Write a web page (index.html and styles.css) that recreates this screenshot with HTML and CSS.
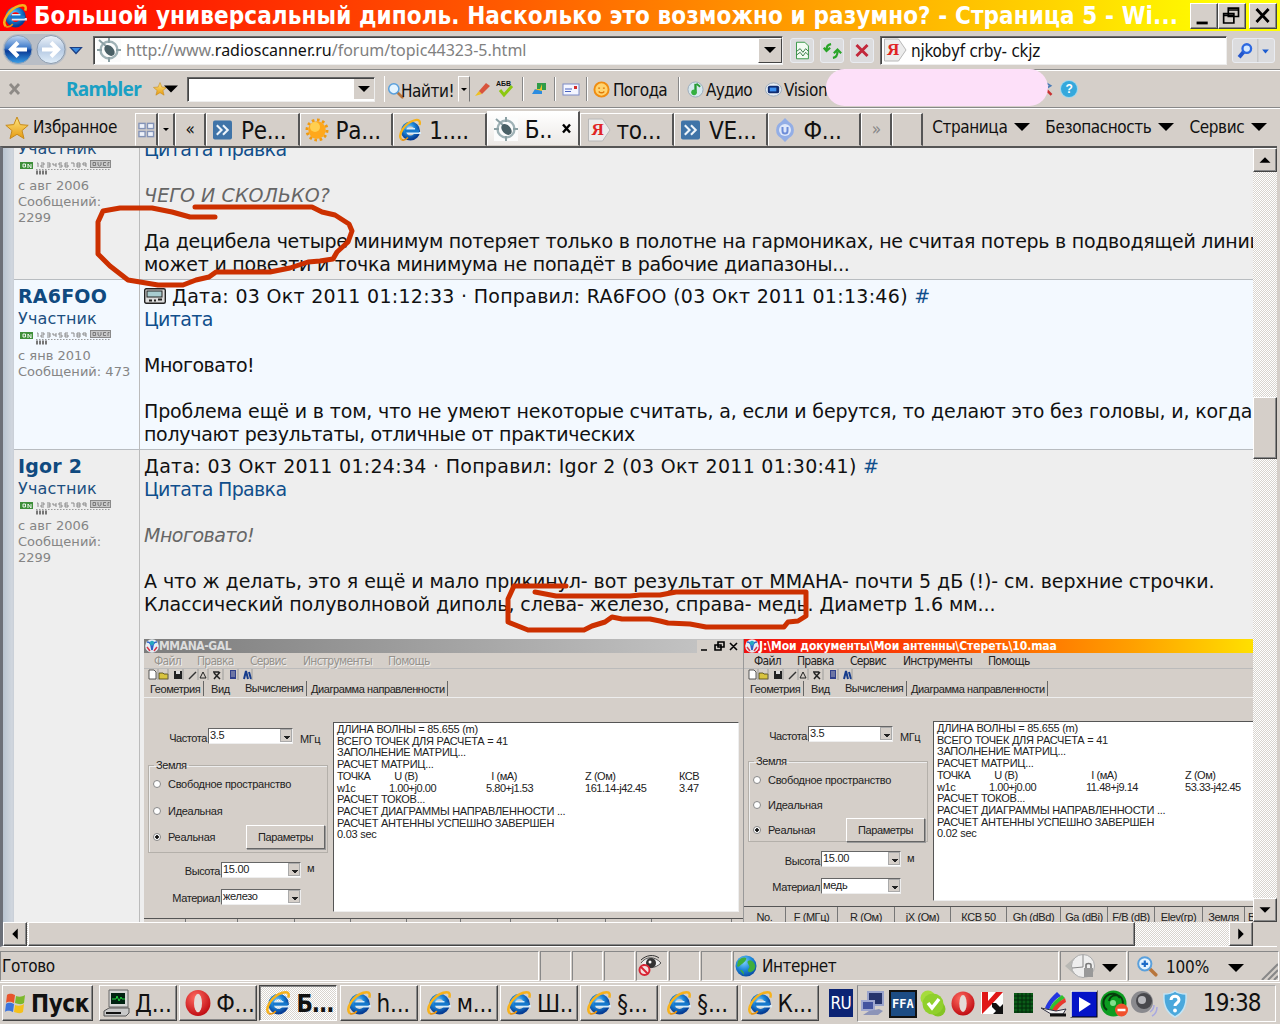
FILE: index.html
```
<!DOCTYPE html>
<html lang="ru">
<head>
<meta charset="utf-8">
<title>Большой универсальный диполь</title>
<link rel="stylesheet" href="styles.css">
</head>
<body>
<svg class="defs" width="0" height="0">
  <defs>
    <radialGradient id="gBlue" cx=".4" cy=".3" r=".8"><stop offset="0" stop-color="#7fd0ff"/><stop offset=".5" stop-color="#1c86d8"/><stop offset="1" stop-color="#063d94"/></radialGradient>
    <linearGradient id="gNav" x1="0" y1="0" x2="0" y2="1"><stop offset="0" stop-color="#c3d9f3"/><stop offset=".45" stop-color="#3c78c8"/><stop offset=".55" stop-color="#0a3a96"/><stop offset="1" stop-color="#3aa0e8"/></linearGradient>
    <linearGradient id="gNav2" x1="0" y1="0" x2="0" y2="1"><stop offset="0" stop-color="#eef4fa"/><stop offset=".5" stop-color="#b4c8e2"/><stop offset="1" stop-color="#e2effa"/></linearGradient>
    <linearGradient id="gStar" x1="0" y1="0" x2="0" y2="1"><stop offset="0" stop-color="#ffe680"/><stop offset="1" stop-color="#e59a10"/></linearGradient>
    <radialGradient id="gRed" cx=".4" cy=".3" r=".8"><stop offset="0" stop-color="#ff6a60"/><stop offset="1" stop-color="#b80008"/></radialGradient>
  </defs>
  <symbol id="ie" viewBox="0 0 24 24">
    <circle cx="12.500" cy="13" r="7" fill="none" stroke="url(#gBlue)" stroke-width="5"/>
    <path d="M9 11.200h8M9 15h14" stroke="#d8ecf8" stroke-width="2.200"/>
    <path d="M7 13h14" stroke="#1678cc" stroke-width="3"/>
    <path d="M3.500 21.500C-1 17 7 5 16 2.500c4-1.200 7-.5 5.500 4.500" fill="none" stroke="#f6b21c" stroke-width="2.300"/>
    <path d="M3.500 21.500c2 1.500 5-.5 6.500-2" fill="none" stroke="#e59210" stroke-width="1.600"/>
  </symbol>
  <symbol id="star" viewBox="0 0 24 24"><path d="M12 1l3.200 7.600 8 .7-6.200 5.300 2 8-7-4.300-7 4.300 2-8L.8 9.300l8-.7z" fill="url(#gStar)" stroke="#c68a1c" stroke-width="1"/></symbol>
  <symbol id="opera" viewBox="0 0 24 24"><ellipse cx="12" cy="12" rx="11.500" ry="12" fill="url(#gRed)"/><ellipse cx="12" cy="12" rx="3.700" ry="8.500" fill="#e4dcd8"/></symbol>
  <symbol id="scan" viewBox="0 0 24 24"><rect width="24" height="24" fill="#fbfcfc"/><circle cx="12" cy="12" r="8.500" fill="none" stroke="#9fb2b6" stroke-width="2.400"/><path d="M12 0v5M12 19v5M0 12h5M19 12h5M2 2l8 7" stroke="#8ba0a4" stroke-width="2"/><ellipse cx="12.500" cy="12.500" rx="4.200" ry="6.200" transform="rotate(-42 12.500 12.500)" fill="#4a6066"/></symbol>
  <symbol id="dbl" viewBox="0 0 20 20"><rect width="20" height="20" rx="2" fill="#3f74a8"/><path d="M4 5l5 5-5 5M10.500 5l5 5-5 5" fill="none" stroke="#eef5fb" stroke-width="2.200"/></symbol>
  <symbol id="sun" viewBox="0 0 24 24"><circle cx="12" cy="12" r="10" fill="none" stroke="#f09a10" stroke-width="3" stroke-dasharray="2.600 2.600"/><circle cx="12" cy="12" r="8.700" fill="#ffa81c"/><circle cx="10" cy="9" r="5" fill="#ffcf50"/></symbol>
  <symbol id="ya" viewBox="0 0 24 24"><path d="M1.500 1h14L23 12l-7.500 11h-14z" fill="#ececec" stroke="#b8b8b8"/></symbol>
  <symbol id="mag" viewBox="0 0 20 20"><path d="M12 12l6 6" stroke="#b8763c" stroke-width="3.200" stroke-linecap="round"/><circle cx="8" cy="8" r="6" fill="#e4f4ff" stroke="#5aa0dc" stroke-width="1.800"/></symbol>
  <symbol id="globe" viewBox="0 0 22 22"><circle cx="11" cy="11" r="10.500" fill="url(#gBlue)"/><path d="M3 6c3-4 7-4 8-3s-1 4-4 6-3 4-5 2zM13 6c3-2 6 1 7 4s-1 6-4 7-4-2-2-4-3-5-1-7zM5 15c3 0 4 2 4 5" fill="#3fae3c"/></symbol>
  <symbol id="down" viewBox="0 0 16 8"><path d="M0 0h16L8 8z"/></symbol>
  <symbol id="mm" viewBox="0 0 14 14"><circle cx="7" cy="7" r="6.800" fill="#e6eef4"/><path d="M2 3c4 0 4 3 5 8M12 3c-4 0-4 3-5 8" stroke="#2c62c8" stroke-width="1.600" fill="none"/><circle cx="7" cy="4" r="2.200" fill="#28a8c0"/><path d="M2 8l3 4M12 8l-3 4" stroke="#d83848" stroke-width="1.500"/></symbol>
  <symbol id="smeter" viewBox="0 0 92 15">
    <rect y="2" width="13" height="7" fill="#3f8f3a"/><path d="M3 4h2.500v3H3zM8 8V4l3 4V4" fill="none" stroke="#fff" stroke-width=".9"/>
    <path d="M17 3h1v4M21 3h3v2h-3v2h3M27 3h3v4h-3m0-2h3M33 3v2h3m0-2v4M42 3h-3v2h3v2h-3M48 3h-3v4h3v-2h-3M51 3h3v4M57 3h3v4h-3zm0 2h3M66 7V3h-3v2h3" fill="none" stroke="#8a8a8a" stroke-width="1"/>
    <path d="M16 9.500h75" stroke="#999" stroke-dasharray="1.500 1.500"/>
    <rect x="70.500" y=".5" width="20" height="7" fill="#c8c8c8" stroke="#8a8a8a"/><path d="M73 2.500h2.500v3H73zM78 2v3l1.500 1L81 5V2M86 2.500h-2.500v3H86M88 6V2.500h1.500" stroke="#666" fill="none" stroke-width=".8"/>
    <path d="M16 12.500h12" stroke="#777" stroke-width="4" stroke-dasharray="2 1"/>
  </symbol>
  <symbol id="tools" viewBox="0 0 110 12">
    <path d="M1 1h5l2 2v7H1z" fill="#fff" stroke="#333" stroke-width=".8"/><path d="M11 4h4l1 1h4v5h-9z" fill="#d8c440" stroke="#4a4210" stroke-width=".8"/>
    <path d="M26 2h8v8h-8z" fill="#222"/><path d="M28 2h4v3h-4z" fill="#ddd"/><path d="M41 10l7-7" stroke="#333" stroke-width="1.500"/><path d="M52 9l3-6 3 6z" fill="none" stroke="#222"/>
    <path d="M66 4l6 6M72 3l-6 7M65 3h6" stroke="#222" stroke-width="1.500"/><path d="M82 1h6v9h-6z" fill="#30408c"/><path d="M83 3h4M83 5h4M83 7h4" stroke="#aab"/><path d="M96 10l2-8 2 8M101 3l2 7" stroke="#163c8c" stroke-width="2" fill="none"/>
    <path d="M10 0v11M20 0v11M35 0v11M50 0v11M60 0v11M75 0v11M90 0v11M104 0v11" stroke="#888" stroke-width=".7"/>
  </symbol>
</svg>

<header class="title">
  <svg class="i26"><use href="#ie"/></svg>
  <h1>Большой универсальный диполь. Насколько это возможно и разумно? - Страница 5 - Wi...</h1>
  <div class="winbtns">
    <span><svg viewBox="0 0 28 25"><path d="M6 20h12" stroke="#000" stroke-width="3"/></svg></span>
    <span><svg viewBox="0 0 28 25"><path d="M10 4h11v9h-11zM10 6h11M5 10h11v10H5zM5 12h11" fill="none" stroke="#000" stroke-width="1.800"/></svg></span>
    <span><svg viewBox="0 0 28 25"><path d="M7 5l13 14M20 5L7 19" stroke="#000" stroke-width="3"/></svg></span>
  </div>
</header>

<nav class="nav">
  <svg class="arrows" viewBox="0 0 84 36">
    <path d="M18 2h33a15 15 0 010 31H18A15 15 0 0118 2z" fill="#b9bec6"/>
    <circle cx="18" cy="17.500" r="14" fill="url(#gNav)" stroke="#8fa2b8"/><circle cx="51" cy="17.500" r="14" fill="url(#gNav2)" stroke="#8d9cae"/>
    <path d="M27 17.500H12M18 10.500l-7 7 7 7" fill="none" stroke="#fff" stroke-width="4"/>
    <path d="M42 17.500h15M51 10.500l7 7-7 7" fill="none" stroke="#fff" stroke-width="4"/>
    <path d="M70.500 15.500h11l-5.500 6z" fill="#3a8be0" stroke="#1c3f84" stroke-width="1.200"/>
  </svg>
  <div class="field addr"><svg class="i24"><use href="#scan"/></svg><span class="url">http://www.<b>radioscanner.ru</b>/forum/topic44323-5.html</span><span class="combo"><svg><use href="#down"/></svg></span></div>
  <span class="soft"><svg viewBox="0 0 24 24"><path d="M6 3h9l4 4v14H6z" fill="#f2fbf2" stroke="#2f9440"/><path d="M6 13l4-3 3 4 3-4 3 3M6 17l4-3 3 4 3-4 3 3" fill="none" stroke="#2f7440"/></svg></span>
  <span class="soft"><svg viewBox="0 0 24 24"><path d="M11 5c-3.500.5-5 3-5 6M3 9l3 3.500 4-3.500M13 20c3.500-.5 5-3 5-7M14 15l4-4 4 4" fill="none" stroke="#28a428" stroke-width="2.400"/></svg></span>
  <span class="soft"><svg viewBox="0 0 24 24"><path d="M6 6l12 12M18 6L6 18" stroke="#c2283c" stroke-width="3.200"/></svg></span>
  <div class="field search"><span class="yandex"><svg class="i24"><use href="#ya"/></svg><b>Я</b></span><span>njkobyf crby- ckjz</span></div>
  <span class="soft wide"><svg viewBox="0 0 42 24"><path d="M6 19l5-6" stroke="#2456cc" stroke-width="4"/><circle cx="14" cy="10" r="4.500" fill="#d4e8ff" stroke="#2c68e0" stroke-width="2.400"/><path d="M25.500 0v24" stroke="#bbb"/><path d="M30 11h7l-3.500 4z" fill="#1c5cd0"/></svg></span>
</nav>

<div class="rambler">
  <svg class="i14" viewBox="0 0 14 14"><path d="M2 2l9 10M11 2L2 12" stroke="#8e8a86" stroke-width="2.800"/></svg>
  <strong class="logo">Rambler</strong>
  <span class="duo"><svg class="i14"><use href="#star"/></svg><svg class="tri"><use href="#down"/></svg></span>
  <div class="field rin"><span class="combo flat"><svg><use href="#down"/></svg></span></div>
  <span class="find"><svg class="i17"><use href="#mag"/></svg><span>Найти!</span></span>
  <span class="minid"><svg><use href="#down"/></svg></span>
  <svg class="i18" viewBox="0 0 18 18"><path d="M2 16l4-5 3 3z" fill="#f0c020"/><path d="M6 11l7-8 4 3-8 8z" fill="#d8543c"/></svg>
  <span class="abv"><em>АБВ</em><svg viewBox="0 0 18 18"><path d="M4 10l4 5 8-9" fill="none" stroke="#8cc810" stroke-width="3"/></svg></span>
  <i class="sep"></i>
  <svg class="i18" viewBox="0 0 18 18"><path d="M1 14l3-5h7v5z" fill="#2c8ce0"/><path d="M6 3h9v7H6z" fill="#2f9c48"/><path d="M3 9h6l2-5v7z" fill="#f0c428"/></svg>
  <i class="sep"></i>
  <svg class="i18" viewBox="0 0 18 18"><rect x="1" y="4" width="16" height="11" fill="#f4f6ff" stroke="#7c8cc8"/><path d="M3 9h7M3 11.500h6" stroke="#4a64c0"/><rect x="12" y="6" width="3" height="3" fill="#d42c2c"/></svg>
  <i class="sep"></i>
  <svg class="i16" viewBox="0 0 18 18"><circle cx="9" cy="9" r="7.500" fill="#ffd470" stroke="#f08c10" stroke-width="2"/><path d="M5.500 7.500h2M10.500 7.500h2M6 11c2 2 4 2 6 0" stroke="#e07808" fill="none" stroke-width="1.500"/></svg>
  <span class="pog">Погода</span>
  <i class="sep"></i>
  <svg class="i16" viewBox="0 0 18 18"><circle cx="9" cy="9" r="8" fill="#d6e8ee" stroke="#9ab"/><path d="M9 3v8" stroke="#259a34" stroke-width="2.500"/><circle cx="7.500" cy="12" r="3" fill="#33b040"/><path d="M10 3l4 3" stroke="#259a34" stroke-width="2"/></svg>
  <span class="aud">Аудио</span>
  <svg class="i16" viewBox="0 0 18 18"><ellipse cx="9" cy="9" rx="8.500" ry="7" fill="#e8eef4" stroke="#9ab"/><rect x="3" y="5" width="12" height="8" rx="2" fill="#102c70"/><rect x="5" y="7" width="7" height="4" fill="#3c90f0"/></svg>
  <span class="vis">Vision</span>
  <svg class="i12" viewBox="0 0 12 18"><path d="M3 2l5 3-5 3" stroke="#4c7cb8" stroke-width="2" fill="none"/><path d="M3 10l6 6" stroke="#c83030" stroke-width="3"/></svg>
  <span class="help">?</span>
</div>

<div class="tabs">
  <svg class="i24"><use href="#star"/></svg><span class="fav">Избранное</span>
  <span class="tab qt"><svg viewBox="0 0 18 18"><g fill="#eef2fa" stroke="#8494b8" stroke-width="1.500"><rect x="1" y="2" width="6.500" height="5.500"/><rect x="10" y="2" width="6.500" height="5.500"/><rect x="1" y="10.500" width="6.500" height="5.500"/><rect x="10" y="10.500" width="6.500" height="5.500"/></g></svg></span>
  <span class="tab md"><svg><use href="#down"/></svg></span>
  <span class="tab sm">«</span>
  <span class="tab"><svg class="i20"><use href="#dbl"/></svg><span>Ре...</span></span>
  <span class="tab sunny"><svg class="i24"><use href="#sun"/></svg><span>Ра...</span></span>
  <span class="tab sunny"><svg class="i24"><use href="#ie"/></svg><span>1....</span></span>
  <span class="tab on"><svg class="i24"><use href="#scan"/></svg><span>Б..</span><svg class="x" viewBox="0 0 10 10"><path d="M1 1l7 8M8 1L1 9" stroke="#000" stroke-width="2.400"/></svg></span>
  <span class="tab"><span class="yandex"><svg class="i24"><use href="#ya"/></svg><b>Я</b></span><span>то...</span></span>
  <span class="tab"><svg class="i20"><use href="#dbl"/></svg><span>VE...</span></span>
  <span class="tab sunny"><svg class="i24" viewBox="0 0 24 24"><path d="M12 0l4 4a9 9 0 010 16l-4 4-4-4a9 9 0 010-16z" fill="#93aee6"/><circle cx="12" cy="12" r="6" fill="#dfe8fa"/><path d="M9.500 9v4a2.500 2.500 0 005 0V9" fill="none" stroke="#6c8cd8" stroke-width="2"/></svg><span>Ф...</span></span>
  <span class="tab sm dim">»</span>
  <span class="tab sm"></span>
  <span class="menu m1">Страница<svg><use href="#down"/></svg></span>
  <span class="menu m2">Безопасность<svg><use href="#down"/></svg></span>
  <span class="menu m3">Сервис<svg><use href="#down"/></svg></span>
</div>

<main class="view">
  <div class="page">
    <article class="post first">
      <aside><span class="role">Участник</span><svg class="sm-meter"><use href="#smeter"/></svg><p>с авг 2006</p><p>Сообщений:</p><p>2299</p></aside>
      <section>
        <p class="l-cit"><a>Цитата</a> <a>Правка</a></p><br>
        <p class="q">ЧЕГО И СКОЛЬКО?</p><br>
        <p class="l-one">Да децибела четыре минимум потеряет только в полотне на гармониках, не считая потерь в подводящей линии</p>
        <p class="l-mid">может и повезти и точка минимума не попадёт в рабочие диапазоны...</p>
      </section>
    </article>
    <article class="post alt">
      <aside><b class="nick">RA6FOO</b><span class="role">Участник</span><svg class="sm-meter"><use href="#smeter"/></svg><p>с янв 2010</p><p>Сообщений: 473</p></aside>
      <section>
        <p class="l-date"><svg class="pager" viewBox="0 0 22 16"><rect x=".7" y=".7" width="20.600" height="14.600" rx="1.500" fill="#ddd" stroke="#222" stroke-width="1.400"/><rect x="3" y="3" width="15" height="6" fill="#a8ccd0" stroke="#222"/><path d="M5 12.500h3M10 12.500h2M14 11.500h4" stroke="#222" stroke-width="2"/></svg>Дата: 03 Окт 2011 01:12:33 · Поправил: RA6FOO (03 Окт 2011 01:13:46) <a>#</a></p>
        <p class="l-cit"><a>Цитата</a></p><br>
        <p class="l-mn">Многовато!</p><br>
        <p class="l-prob">Проблема ещё и в том, что не умеют некоторые считать, а, если и берутся, то делают это без головы, и, когда</p>
        <p class="l-res">получают результаты, отличные от практических</p>
      </section>
    </article>
    <article class="post last">
      <aside><b class="nick">Igor 2</b><span class="role">Участник</span><svg class="sm-meter"><use href="#smeter"/></svg><p>с авг 2006</p><p>Сообщений:</p><p>2299</p></aside>
      <section>
        <p class="l-date">Дата: 03 Окт 2011 01:24:34 · Поправил: Igor 2 (03 Окт 2011 01:30:41) <a>#</a></p>
        <p class="l-cit"><a>Цитата</a> <a>Правка</a></p><br>
        <p class="q l-mn">Многовато!</p><br>
        <p class="l-a">А что ж делать, это я ещё и мало прикинул- вот результат от ММАНА- почти 5 дБ (!)- см. верхние строчки.</p>
        <p class="l-a">Классический полуволновой диполь, слева- железо, справа- медь. Диаметр 1.6 мм...</p>
        <figure class="shots">
          <div class="mm gray">
            <div class="mt"><svg class="i14"><use href="#mm"/></svg><span class="mname">MMANA-GAL</span><span class="mbtn"><svg viewBox="0 0 46 13"><path d="M4 10h6M21 2h6v5h-6zM18 5h6v5h-6zM33 3l7 7M40 3l-7 7" fill="none" stroke="#000" stroke-width="1.600"/></svg></span></div>
            <div class="mmenu"><span>Файл</span><span>Правка</span><span>Сервис</span><span>Инструменты</span><span>Помощь</span></div>
            <svg class="mtools"><use href="#tools"/></svg>
            <div class="mtabs"><span>Геометрия</span><span>Вид</span><span>Вычисления</span><span>Диаграмма направленности</span></div>
            <div class="mbody">
              <div class="left">
                <div class="row freq"><span>Частота</span><span class="cb">3.5<i></i></span><span class="unit">МГц</span></div>
                <fieldset><legend>Земля</legend>
                  <div class="rad"><i></i>Свободное пространство</div><div class="rad"><i></i>Идеальная</div><div class="rad sel"><i></i>Реальная<span class="pb">Параметры</span></div>
                </fieldset>
                <div class="row"><span>Высота</span><span class="cb">15.00<i></i></span><span class="unit up">м</span></div>
                <div class="row"><span>Материал</span><span class="cb">железо<i></i></span></div>
              </div>
              <div class="out">
                <p>ДЛИНА ВОЛНЫ = 85.655 (m)</p><p>ВСЕГО ТОЧЕК ДЛЯ РАСЧЕТА = 41</p><p>ЗАПОЛНЕНИЕ МАТРИЦ...</p><p>РАСЧЕТ МАТРИЦ...</p>
                <p class="cols"><span>ТОЧКА</span><span>&nbsp; U (В)</span><span>&nbsp; I (мА)</span><span>Z (Ом)</span><span>КСВ</span></p>
                <p class="cols"><span>w1c</span><span>1.00+j0.00</span><span>5.80+j1.53</span><span>161.14-j42.45</span><span>3.47</span></p>
                <p>РАСЧЕТ ТОКОВ...</p><p>РАСЧЕТ ДИАГРАММЫ НАПРАВЛЕННОСТИ ...</p><p>РАСЧЕТ АНТЕННЫ УСПЕШНО ЗАВЕРШЕН</p><p>0.03 sec</p>
              </div>
            </div>
            <div class="mtable"><span></span><span></span><span></span><span></span><span></span><span></span><span></span><span></span><span></span><span></span><span></span></div>
          </div>
          <div class="mm color">
            <div class="mt"><svg class="i14"><use href="#mm"/></svg><span class="mname">J:\Мои документы\Мои антенны\Стереть\10.maa</span></div>
            <div class="mmenu"><span>Файл</span><span>Правка</span><span>Сервис</span><span>Инструменты</span><span>Помощь</span></div>
            <svg class="mtools"><use href="#tools"/></svg>
            <div class="mtabs"><span>Геометрия</span><span>Вид</span><span>Вычисления</span><span>Диаграмма направленности</span></div>
            <div class="mbody">
              <div class="left">
                <div class="row freq"><span>Частота</span><span class="cb">3.5<i></i></span><span class="unit">МГц</span></div>
                <fieldset><legend>Земля</legend>
                  <div class="rad"><i></i>Свободное пространство</div><div class="rad"><i></i>Идеальная</div><div class="rad sel"><i></i>Реальная<span class="pb">Параметры</span></div>
                </fieldset>
                <div class="row"><span>Высота</span><span class="cb">15.00<i></i></span><span class="unit up">м</span></div>
                <div class="row"><span>Материал</span><span class="cb">медь<i></i></span></div>
              </div>
              <div class="out">
                <p>ДЛИНА ВОЛНЫ = 85.655 (m)</p><p>ВСЕГО ТОЧЕК ДЛЯ РАСЧЕТА = 41</p><p>ЗАПОЛНЕНИЕ МАТРИЦ...</p><p>РАСЧЕТ МАТРИЦ...</p>
                <p class="cols"><span>ТОЧКА</span><span>&nbsp; U (В)</span><span>&nbsp; I (мА)</span><span>Z (Ом)</span></p>
                <p class="cols"><span>w1c</span><span>1.00+j0.00</span><span>11.48+j9.14</span><span>53.33-j42.45</span></p>
                <p>РАСЧЕТ ТОКОВ...</p><p>РАСЧЕТ ДИАГРАММЫ НАПРАВЛЕННОСТИ ...</p><p>РАСЧЕТ АНТЕННЫ УСПЕШНО ЗАВЕРШЕН</p><p>0.02 sec</p>
              </div>
            </div>
            <div class="mtable"><span>No.</span><span>F (МГц)</span><span>R (Ом)</span><span>jX (Ом)</span><span>КСВ 50</span><span>Gh (dBd)</span><span>Ga (dBi)</span><span>F/B (dB)</span><span>Elev(гр)</span><span>Земля</span><span>В</span></div>
          </div>
        </figure>
      </section>
    </article>
  </div>
  <div class="vbar"><span class="sb"><svg viewBox="0 0 24 22"><path d="M6 14h12l-6-6z"/></svg></span><span class="gap1"></span><span class="thumb"></span><span class="gap2"></span><span class="sb"><svg viewBox="0 0 24 22"><path d="M6 8h12l-6 6z"/></svg></span></div>
  <div class="hbar"><span class="sb"><svg viewBox="0 0 24 24"><path d="M15 6v12l-6-6z"/></svg></span><span class="thumb"></span><span class="fill"></span><span class="sb"><svg viewBox="0 0 24 24"><path d="M9 6v12l6-6z"/></svg></span><span class="corner"></span></div>
</main>

<footer class="status">
  <span>Готово</span><span></span><span></span><span></span>
  <span><svg class="i24" viewBox="0 0 24 24"><path d="M3 9c5-7 14-7 20 0-6 6-14 6-18 1" fill="#eee" stroke="#555"/><path d="M3 6c5-5 13-6 18-2" stroke="#333" fill="none"/><circle cx="13" cy="9" r="5" fill="#333"/><circle cx="12" cy="8" r="1.500" fill="#fff"/><circle cx="6.500" cy="16" r="5" fill="#f4dede" stroke="#d82434" stroke-width="2"/><path d="M3 13l7 7" stroke="#d82434" stroke-width="2"/></svg></span>
  <span></span><span></span>
  <span><svg class="i22"><use href="#globe"/></svg>Интернет</span>
  <span><svg class="prot" viewBox="0 0 32 26"><path d="M1 13l9-8v16z" fill="#b8b8b4"/><circle cx="19" cy="13" r="11.500" fill="#eee" stroke="#aaa"/><path d="M19 2v12M8 15l11-1" stroke="#888"/><rect x="20" y="15" width="9" height="9" fill="#999"/><path d="M22 15v-3c0-2 5-2 5 0v3" stroke="#777" fill="none" stroke-width="1.600"/></svg><svg class="tri"><use href="#down"/></svg></span>
  <span><svg class="i22" viewBox="0 0 20 20"><use href="#mag" width="20" height="20"/><path d="M5 8h6M8 5v6" stroke="#1c6cc8" stroke-width="2"/></svg><em>100%</em><svg class="tri"><use href="#down"/></svg><svg class="grip" viewBox="0 0 18 24"><path d="M2 23L18 7M8 23l10-10M14 23l4-4" stroke="#888" stroke-width="2"/></svg></span>
</footer>

<div class="task">
  <span class="tb start"><svg class="i24" viewBox="0 0 24 24"><path d="M3 4c3-2 5-1 8 0l-1 8c-3-1-5-2-8 0z" fill="#e8542c"/><path d="M12 5c3 1 6 1 9-1l-1 8c-3 2-6 1-9 0z" fill="#7cb82c"/><path d="M2 13c3-2 5-1 8 0l-1 8c-3-1-5-2-8 0z" fill="#3c74dc"/><path d="M11 14c3 1 6 1 9-1l-1 8c-3 2-6 1-9 0z" fill="#f4c01c"/></svg><b>Пуск</b></span>
  <span class="tb"><svg class="i28" viewBox="0 0 28 28"><path d="M6 1h19v17H6z" fill="#d8d8d8" stroke="#666"/><rect x="8" y="4" width="14" height="11" fill="#021"/><path d="M9 10h4l1-3 2 5 2-4 1 2h3" stroke="#20d040" fill="none"/><path d="M1 22l5-3h20v5l-3 3H1z" fill="#c8c8c8" stroke="#555"/><path d="M3 24h15" stroke="#111" stroke-width="2"/></svg><span>Д...</span></span>
  <span class="tb"><svg class="i26"><use href="#opera"/></svg><span>Ф...</span></span>
  <span class="tb on"><svg class="i26"><use href="#ie"/></svg><b>Б...</b></span>
  <span class="tb"><svg class="i26"><use href="#ie"/></svg><span>h...</span></span>
  <span class="tb"><svg class="i26"><use href="#ie"/></svg><span>м...</span></span>
  <span class="tb"><svg class="i26"><use href="#ie"/></svg><span>Ш..</span></span>
  <span class="tb"><svg class="i26"><use href="#ie"/></svg><span>§...</span></span>
  <span class="tb"><svg class="i26"><use href="#ie"/></svg><span>§...</span></span>
  <span class="tb"><svg class="i26"><use href="#ie"/></svg><span>К...</span></span>
  <span class="lang">RU</span>
  <div class="tray">
    <svg viewBox="0 0 28 28"><path d="M9 2h15v13H9z" fill="#26346c" stroke="#9aa4cc" stroke-width="2"/><path d="M3 11h12v9H3z" fill="#4454a0" stroke="#a0a8d0" stroke-width="2"/><path d="M4 25l6-4 10-2 4 2-5 4z" fill="#8c94b8"/></svg>
    <span class="ffa">FFA</span>
    <svg viewBox="0 0 28 28"><circle cx="9" cy="8" r="7.500" fill="#a6dc3c"/><circle cx="19" cy="19" r="7.500" fill="#84c424"/><circle cx="14" cy="14" r="10.500" fill="#90d02c"/><path d="M9 13l4 5 7-9" fill="none" stroke="#fff" stroke-width="3.500"/></svg>
    <svg viewBox="0 0 28 28"><use href="#opera" x="2" y="1" width="24" height="25"/></svg>
    <svg viewBox="0 0 28 28"><rect x="2" y="2" width="22" height="22" fill="#fff"/><path d="M3 2h6v9l8-9h7L13 14l-4 4-6 6z" fill="#e01818"/><path d="M13 13l4 0 4 4 3-3v10H14l3-3-4-4z" fill="#111"/></svg>
    <svg viewBox="0 0 28 28"><rect x="4" y="3" width="19" height="20" fill="#0b5c18"/><path d="M4 6h19M4 10h19M4 14h19M4 18h19M4 22h19M8 3v20M12 3v20M16 3v20M20 3v20" stroke="#02280a"/></svg>
    <svg viewBox="0 0 28 28"><path d="M5 18C8 10 13 6 17 2l4 4C15 9 12 13 9 20z" fill="#2436e0"/><path d="M9 20c3-8 8-11 13-15l3 3c-5 3-9 7-12 13z" fill="#30c030"/><path d="M12 21c2-6 8-10 13-13l1 4c-5 3-8 6-10 10z" fill="#e8382c"/><path d="M1 18l10 6h12l3-5-10 2z" fill="#f0f0f0" stroke="#334"/><path d="M10 25h16" stroke="#111" stroke-width="3"/></svg>
    <svg viewBox="0 0 28 28"><rect x="1" y="1" width="26" height="26" fill="#0414c8" stroke="#000"/><path d="M1 27V1h26" stroke="#fff" stroke-width="1.500" fill="none"/><path d="M9 7l12 7-12 8z" fill="#fff"/></svg>
    <svg viewBox="0 0 28 28"><circle cx="13.500" cy="13.500" r="13" fill="#0c9c20"/><path d="M7 20a9 9 0 1113-12M18 19a7 7 0 10-9-8" fill="none" stroke="#063c0c" stroke-width="2"/><circle cx="13" cy="13" r="3" fill="#7fe08c"/><circle cx="21.500" cy="20" r="6.500" fill="#f0502c"/><path d="M17.500 20h8" stroke="#fff" stroke-width="2.500"/></svg>
    <svg viewBox="0 0 28 28"><circle cx="12" cy="12" r="11" fill="#8a8a8e"/><circle cx="14" cy="11" r="8" fill="#48484c"/><circle cx="12" cy="10" r="4" fill="#b8b8bc"/><path d="M20 22c3-2 4-4 4-7M22 26c4-2 5-6 5-9" stroke="#a8a8e0" fill="none" stroke-width="1.500"/></svg>
    <svg viewBox="0 0 28 28"><path d="M14 1c4 3 8 3 11 3 1 12-3 19-11 23C6 23 2 16 3 4c3 0 7 0 11-3z" fill="#4aa8dc" stroke="#c4e4f4" stroke-width="1.500"/><path d="M10 10c0-5 8-5 8 0 0 3-4 3-4 6" fill="none" stroke="#fff" stroke-width="3"/><circle cx="14" cy="20.500" r="1.900" fill="#fff"/></svg>
    <time>19:38</time>
  </div>
</div>

<svg class="ink" viewBox="0 0 1280 1024">
  <path d="M195 207H312L322 212L335 215L349 224L352 231L348 242L337 252L333 259L320 261L308 262L290 268L270 272H216L209 277L196 280L183 285H158L128 280L110 266L98 254V222L103 211L120 208H152L172 212L190 217H215"/>
  <path d="M566 586H514L508 599V622L528 630H584L592 626L605 622L612 617L622 619H650L660 621L668 623L690 624L706 627H784L788 622L798 621L806 616V592H676L660 595H640L630 596H556L535 592"/>
</svg>
</body>
</html>
```
FILE: styles.css
```
*{box-sizing:border-box}
body{margin:0;width:1280px;height:1024px;overflow:hidden;background:#d5cfc9;font:17px/1.2 "DejaVu Sans Condensed","DejaVu Sans",sans-serif;letter-spacing:-.4px;color:#111;display:flex;flex-direction:column;white-space:nowrap;position:relative}
p,h1,figure,fieldset{margin:0;padding:0;border:0}
svg{display:block;flex:none}
span,strong,time{flex:none}
.defs{position:absolute}
.i12{width:10px;height:18px}.i14{width:14px;height:14px}.i16{width:17px;height:17px}.i17{width:17px;height:17px}.i18{width:18px;height:18px}
.i20{width:19px;height:20px}.i22{width:22px;height:22px}.i24{width:24px;height:24px}.i26{width:26px;height:26px}.i28{width:28px;height:28px}
.tri{width:16px;height:8px}

.title{height:31px;flex:none;display:flex;align-items:center;padding:0 3px 0 2px;background:linear-gradient(90deg,#f00 0,#ff1a00 12%,#ff5c00 40%,#ff9c00 62%,#ffd400 82%,#ff0 96%)}
.title h1{font-size:24px;line-height:31px;letter-spacing:.09px;color:#fff;margin-left:6px;padding-top:2px;width:1156px}
.winbtns{display:flex}
.winbtns span{width:28px;height:26px;background:#d5cfc9;border:1px solid;border-color:#fff #444 #444 #fff;box-shadow:inset -1px -1px #888}
.winbtns span:last-child{margin-left:3px}
.winbtns svg{width:26px;height:24px}

.nav{height:39px;flex:none;display:flex;align-items:center;border-bottom:1px solid #888}
.arrows{width:84px;height:36px}
.field{height:29px;background:#fff;border:1px solid;border-color:#666 #eee #eee #666;box-shadow:inset 1px 1px #444;display:flex;align-items:center}
.addr{width:690px;margin-left:9px;padding-left:3px}
.url{font-family:"Noto Sans",sans-serif;font-size:16px;letter-spacing:0;color:#808080;margin-left:5px;padding-top:2px}
.url b{font-weight:400;color:#111}
.combo{width:24px;height:25px;margin-left:auto;background:#d5cfc9;border:1px solid;border-color:#fff #444 #444 #fff;display:grid;place-items:center}
.combo svg{width:12px;height:6px}
.combo.flat{width:20px;height:20px;border-color:#d5cfc9}
.soft{width:24px;height:25px;margin-left:7px;border:1px solid #e9ecf2;border-radius:3px;background:#dcdcde}
.soft svg{width:22px;height:23px}
.soft+.soft{margin-left:6px}
.search{width:347px;margin-left:6px;padding-left:2px;gap:4px;letter-spacing:-.26px}
.search>span:last-child{padding-top:2px}
.soft.wide{width:43px;margin-left:5px}.soft.wide svg{width:41px}
.yandex{display:grid;width:24px;height:24px}
.yandex>*{grid-area:1/1}
.yandex b{color:#e02424;font:700 17px/24px "Liberation Serif",serif;padding-left:4px;letter-spacing:0}

.rambler{height:38px;flex:none;border-top:1px solid #fff;border-bottom:1px solid #888;display:grid;align-items:center;
grid-template-columns:58px 87px 34px 197px 74px 15px 23px 26px 9px 23px 8px 24px 7px 17px 68px 9px 17px 61px 17px 262px 17px 20px;padding-left:8px;grid-auto-flow:column}
.logo{color:#1aa0c4;font:700 19px/1 "Noto Sans",sans-serif;letter-spacing:-.7px}
.duo{display:flex;align-items:center}.duo .tri{width:14px;height:8px;margin-left:-3px}
.rin{width:188px;height:25px}
.find{display:flex;align-items:center;border-left:1px solid #fff;height:26px;padding-left:2px;padding-top:2px}
.find span{margin-left:-3px;letter-spacing:-.45px;padding-top:2px}
.minid{width:12px;height:26px;border:1px solid;border-color:#fff #777 #d5cfc9 #fff;display:grid;place-items:center}
.minid svg,.md svg{width:6px;height:3px}
.abv{display:grid;width:18px;height:18px}.abv>*{grid-area:1/1}.abv svg{width:18px;height:18px}
.abv em{font:700 7px/8px "Liberation Sans",sans-serif;letter-spacing:0}
.sep{width:2px;height:24px;border-left:1px solid #888;border-right:1px solid #fff}
.pog{letter-spacing:-.7px;padding:3px 0 0 3px}.aud{letter-spacing:-.7px;padding:3px 0 0 2px}
.vis{letter-spacing:-.4px;display:flex;align-items:center;padding-left:2px;padding-top:3px;position:relative}
.vis::after{content:"";position:absolute;left:44px;top:-8px;width:222px;height:37px;border-radius:20px;background:#fde0f9}
.help{width:16px;height:16px;border-radius:50%;background:#35a8dc;color:#fff;font:700 12px/16px "Liberation Sans",sans-serif;text-align:center;box-shadow:0 0 0 1px #9cd8f0}

.tabs{height:38px;flex:none;border-top:1px solid #fff;display:flex;align-items:flex-start;padding-left:5px}
.tabs>.i24{margin-top:7px}
.fav{margin:8px 16px 0 4px;width:86px;letter-spacing:-.32px}
.tab{height:33px;margin-top:4px;width:93.600px;border:1px solid;border-color:#fff #555 #d5cfc9 #fff;border-right-width:2px;padding-left:6px;display:flex;align-items:center;font-size:24px;letter-spacing:-.3px;overflow:hidden}
.tab>span:not(.yandex){margin-left:9px;padding-top:4px}
.tab.sunny{padding-left:4px}
.tab.sunny>span{margin-left:7px!important}
.tab.qt{width:23px;padding:0 0 0 2px}.qt svg{width:17px;height:18px}
.tab.md{width:17px;padding:0;justify-content:center}
.tab.sm{width:31px;padding:0;justify-content:center;font-size:17px}
.tab.dim{color:#888}
.tab.on{background:linear-gradient(#fff,#ece9e6);margin-top:2px;height:35px}
.tab.on>span{margin-left:7px!important}
.tab .x{width:10px;height:11px;margin-left:10px}
.tab>.yandex+span{margin-left:5px!important}
.menu{display:flex;align-items:center;margin-top:8px;letter-spacing:-.4px}
.menu svg{width:16px;height:8px;margin-left:7px}
.m1{margin-left:9px}.m2{margin-left:15px}.m3{margin-left:15px}

.view{height:801px;flex:none;margin:0 3px 0 0;border-top:2px solid #555;border-left:3px solid #6c7078;display:grid;grid-template:774px 24px/1250px 24px;background:#d5cfc9;border-bottom:1px solid #fff}
.page{overflow:hidden;background:linear-gradient(90deg,#b8c4d0,#d0d6de 9px,#c8ced6 11px) 0 0/11px 100% no-repeat #eee;padding-left:11px}
.post{display:flex;background:#eee;border-bottom:1px solid #b8bcc0;font-family:"DejaVu Sans",sans-serif;color:#111}
.post aside{width:126px;border-right:1px solid #bbb;padding:5px 0 0 4px;display:flex;flex-direction:column;flex:none}
.post section{padding:5px 0 3px 4px;font-size:19px;line-height:23px;width:1113px;overflow:hidden;flex:none}
.post.first{margin-top:-10px}.post.first aside,.post.first section{padding-top:0}
.post.alt{background:#f3f9ff}
.first,.alt{letter-spacing:0}
.last section{padding-bottom:0}
.nick{font-size:19px;line-height:23px;color:#104a80;letter-spacing:.2px}
.role{font-size:16px;line-height:22px;color:#1c4f80;letter-spacing:.16px}
.sm-meter{width:92px;height:15px;margin:0 0 3px 2px}
.nick+.role+.sm-meter{margin-bottom:3px}
aside p{font-size:13px;line-height:16px;color:#858585;letter-spacing:.02px}
a{color:#104f8c}
.q{font-style:italic;color:#666;letter-spacing:.1px}
.l-date{letter-spacing:.29px}.l-cit{letter-spacing:-.65px}.l-one{letter-spacing:-.27px}.l-mid{letter-spacing:-.24px}.l-res{letter-spacing:-.3px}.l-mn{letter-spacing:-.5px}.l-prob{letter-spacing:-.16px}.l-a{letter-spacing:-.07px}
.pager{display:inline-block;width:22px;height:16px;margin-right:6px;vertical-align:-1px}

.shots{display:flex;margin-top:23px;height:283px;width:1200px}
.mm{width:600px;flex:none;background:#d5cfc9;color:#222;font:11px/12px "Liberation Sans",Arial,sans-serif;letter-spacing:-.42px;border-right:1px solid #999;overflow:hidden}
.mt{height:14px;display:flex;align-items:center;color:#fff;font:700 12px/14px "DejaVu Sans Condensed",sans-serif;letter-spacing:-.07px;padding-left:1px}
.gray .mt{background:linear-gradient(90deg,#7c7c7c,#c8c8c8)}.gray .mname{color:#ddd;letter-spacing:-.4px}
.color .mt{background:linear-gradient(90deg,#f01010,#ff5000 35%,#ffa000 65%,#ffe000 85%)}
.mbtn{margin-left:auto}.mbtn svg{width:46px;height:13px;background:#d5cfc9}
.mmenu{height:16px;display:grid;grid-template-columns:43px 53px 53px 85px 60px;padding-left:10px;font:12px/16px "DejaVu Sans Condensed",sans-serif;letter-spacing:-.75px;border-bottom:1px solid #bbb}
.gray .mmenu{color:#96928c;text-shadow:1px 1px #eee}
.mtools{width:110px;height:12px;margin-left:4px}
.mtabs{display:flex;height:17px;line-height:16px;padding-left:6px;border-bottom:1px solid #eee}
.mtabs span{border-right:1px solid #666;height:15px}
.mtabs span:nth-child(1){width:54px}.mtabs span:nth-child(2){width:41px;padding-left:7px;border:0}.mtabs span:nth-child(3){width:62px;letter-spacing:-.5px;line-height:14px}.mtabs span:nth-child(4){padding-left:4px;width:141px}
.mbody{display:flex;height:214px}
.mbody .left{width:189px;padding:27px 5px 0 4px}
.row{display:grid;grid-template-columns:72px 81px 30px;align-items:center;height:27px}
.row>span:first-child{text-align:right;padding-top:3px}
.row.freq{grid-template-columns:59px 86px 30px;height:22px}
.unit{padding-left:7px;padding-top:6px}.unit.up{padding:0 0 3px 6px}
.cb{background:#fff;border:1px solid;border-color:#666 #eee #eee #666;height:16px;line-height:13px;padding-left:1px;display:flex;justify-content:space-between;margin-left:1px;letter-spacing:-.3px}
.cb i{width:12px;height:13px;background:linear-gradient(#222,#222) 3px 6px/6px 1px no-repeat,linear-gradient(#222,#222) 4px 7px/4px 1px no-repeat,linear-gradient(#222,#222) 5px 8px/2px 1px no-repeat,#d5cfc9;border:1px solid #aaa}
fieldset{border:1px solid #b4b0aa;height:94px;margin:12px 0 3px;min-width:0;box-shadow:inset 1px 1px #eee;padding-left:4px}
legend{padding:0 2px;margin-left:1px;line-height:12px}
.rad{display:flex;align-items:center;height:26.500px;letter-spacing:-.28px}
.rad i{width:8px;height:8px;border-radius:50%;background:#fff;border:1px solid #888;margin-right:7px}
.rad.sel i{background:radial-gradient(#111 35%,#fff 50%)}
.pb{margin-left:auto;margin-right:2px;width:79px;height:24px;line-height:22px;text-align:center;border:1px solid;border-color:#fff #666 #666 #fff;box-shadow:1px 1px #999;letter-spacing:-.4px}
.out{flex:1;margin:24px 4px 0 0;background:#fff;border:1px solid;border-color:#555 #eee #eee #555;padding:1px 0 0 3px;line-height:11.700px;height:190px;letter-spacing:-.25px}
.cols{display:grid;grid-template-columns:52px 97px 99px 94px 50px}
.cols span{letter-spacing:-.45px}
.mtable{display:grid;grid-template-columns:42px 52px 57px 56px 56px 54px 50px 47px 48px 46px 80px;margin-top:6px;border-top:1px solid #555;height:20px;line-height:22px;text-align:center}
.mtable span{border-right:1px solid #777}
.color .mbody{height:203px}
.color .left{padding-top:25px}
.color .out{margin-top:23px;height:180px;margin-right:0}
.color fieldset{height:87px;margin:10px 0 4px}
.color .rad{height:25px}
.color .row:not(.freq){height:26.500px}
.color .mtable{margin-top:5px;height:40px;line-height:20px}
.mtable span:last-child{text-align:left;padding-left:3px}
.color .mtable{grid-template-columns:42px 52px 57px 56px 56px 54px 47px 47px 48px 42px 80px}

.sb,.thumb{background:#d5cfc9;border:1px solid;border-color:#fff #444 #444 #fff;box-shadow:inset -1px -1px #888;display:block}
.vbar,.hbar,.tb.on{background:repeating-conic-gradient(#fff 0 25%,#d8d4ce 0 50%) 0 0/2px 2px}
.vbar{display:flex;flex-direction:column}
.vbar .sb{height:24px}.vbar .sb svg{width:22px;height:22px}.gap1{height:225px}.vbar .thumb{height:62px}.gap2{flex:1}
.hbar{grid-column:1/3;display:flex}
.hbar .sb{width:24px}.hbar .sb svg{width:22px;height:22px}
.hbar .thumb{width:1107px;margin-left:1px}.fill{flex:1}.corner{width:24px;background:#d5cfc9}

.status{height:35px;flex:none;display:grid;grid-template-columns:539px 31px 31px 31px 32px 31px 31px 326px 67px 151px;gap:1px;padding-top:4px}
.status span{border:1px solid;border-color:#888 #fff #fff #888;height:30px;display:flex;align-items:center;padding-left:1px;overflow:hidden;letter-spacing:-.45px}
.status span:nth-child(8) svg{margin-right:5px}
.status em{font-style:normal;letter-spacing:-.18px;margin:3px 0 0 8px;width:44px}
.prot{width:32px;height:26px;margin-left:2px}
.status .prot+.tri{margin:3px 0 0 6px}
.status em+.tri{margin:4px 0 0 18px}
.status span:last-child .i22{margin-left:6px}
.grip{width:18px;height:24px;margin:6px 0 0 auto}

.task{height:42px;flex:none;display:flex;padding:2px 3px 0 2px;border-top:1px solid #fff}
.tb{width:78px;height:36px;margin-right:2.200px;border:1px solid;border-color:#fff #444 #444 #fff;box-shadow:inset -1px -1px #888;display:flex;align-items:center;padding-left:5px;font-size:24px;letter-spacing:-.2px;overflow:hidden}
.tb>span,.tb>b{margin-left:5px;padding-top:3px}
.tb.on b{letter-spacing:-1px}
.tb .i28{margin-left:-2px}.tb .i28+span{margin-left:4px}
.start{width:91px;margin-right:6px;padding-left:1px}.start b{margin-left:3px;letter-spacing:-.4px}
.tb.on{border-color:#444 #fff #fff #444;box-shadow:inset 1px 1px #888}
.lang{width:24px;height:28px;margin:4px 0 0 8px;background:#0c2474;color:#fff;text-align:center;line-height:28px;font-size:17px;letter-spacing:-.8px}
.tray{flex:1;margin:0 1px 0 4px;height:37px;border:1px solid;border-color:#aaa #fff #fff #888;display:flex;align-items:center;padding-left:1px;gap:2.200px}
.tray svg,.ffa{width:28px;height:28px}
.ffa{background:#1c4c84;border:2px solid #111;color:#fff;font:700 12px/24px "DejaVu Sans Mono",monospace;letter-spacing:0;text-align:center}
.tray time{font-size:24px;letter-spacing:-.85px;margin-left:12px}
.ink{position:absolute;left:0;top:0;width:1280px;height:1024px;fill:none;stroke:#cc3000;stroke-width:5;stroke-linecap:round;stroke-linejoin:round;pointer-events:none}
```
